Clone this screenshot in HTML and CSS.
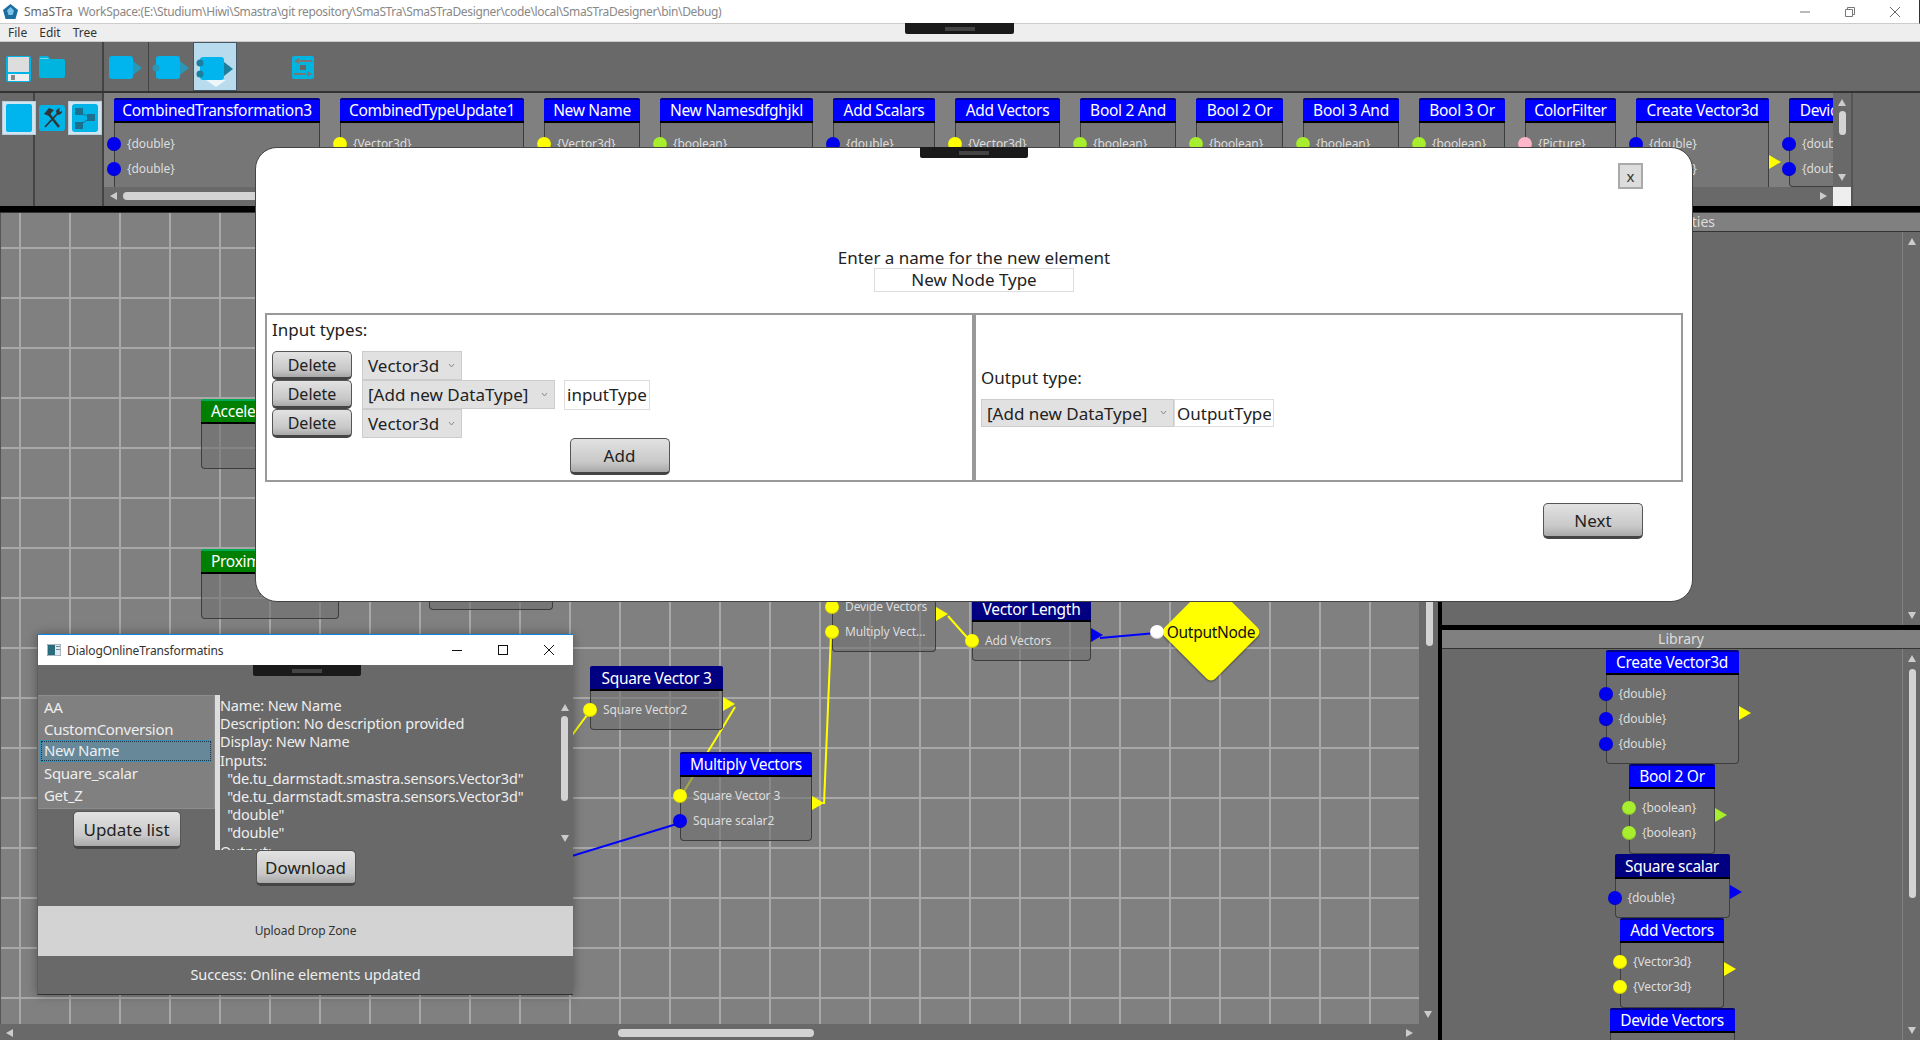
FILE: index.html
```html
<!DOCTYPE html>
<html>
<head>
<meta charset="utf-8"/>
<title>SmaSTra</title>
<link rel="stylesheet" href="styles.css">
</head>
<body>

<div class="app">

<!-- title + menu -->
<div class="titlebar">
	<svg class="appicon" width="15" height="15" viewBox="0 0 15 15"><path d="M7.5 0 15 6 12.5 15h-10L0 6z" fill="#1b6f9e"/><path d="M7.5 3 11 6.5 9.5 11h-4L4 6.5z" fill="#7fc4e6"/></svg>
	<span class="appname">SmaSTra</span>
	<span class="apppath">WorkSpace:(E:\Studium\Hiwi\Smastra\git repository\SmaSTra\SmaSTraDesigner\code\local\SmaSTraDesigner\bin\Debug)</span>
	<div class="winbtns">
		<svg width="12" height="12" viewBox="0 0 12 12"><path d="M1 6h10" stroke="#777"/></svg>
		<svg width="12" height="12" viewBox="0 0 12 12" fill="none" stroke="#777"><path d="M1.5 3.5h7v7h-7zM3.5 3.5v-2h7v7h-2"/></svg>
		<svg width="12" height="12" viewBox="0 0 12 12"><path d="M1 1l10 10M11 1 1 11" stroke="#666"/></svg>
	</div>
</div>
<div class="menubar"><span>File</span><span>Edit</span><span>Tree</span></div>

<!-- toolbar -->
<div class="toolbar">
	<div class="tool t37">
		<svg width="25" height="26" viewBox="0 0 25 26"><rect width="25" height="26" rx="2" fill="#00b4e8"/><rect x="2" y="1" width="21" height="15" fill="#ddd"/><rect x="2" y="18" width="21" height="7" fill="#eee"/><rect x="5" y="19" width="4" height="5" fill="#888"/></svg>
	</div>
	<div class="tool t30">
		<svg width="26" height="22" viewBox="0 0 26 22"><path d="M0 2q0-2 2-2h7l2 3h13q2 0 2 2v15q0 2-2 2H2q-2 0-2-2z" fill="#00b4e0"/><path d="M1 2h8l1 1H1z" fill="#6fd4ee"/></svg>
	</div>
	<div class="tool t36"></div>
	<div class="tool t45 line">
		<svg width="34" height="24" viewBox="0 0 34 24"><rect width="24" height="23" rx="3" fill="#00b4ee"/><path d="M24 5l9 7-9 7z" fill="#2a96b8"/></svg>
	</div>
	<div class="tool t45 line">
		<svg width="38" height="24" viewBox="0 0 38 24"><rect x="4" width="24" height="23" rx="3" fill="#00b4ee"/><circle cx="4" cy="12" r="3.5" fill="#2a96b8"/><path d="M28 5l9 7-9 7z" fill="#2a96b8"/></svg>
	</div>
	<div class="tool t44 on">
		<svg width="38" height="24" viewBox="0 0 38 24"><rect x="4" width="24" height="23" rx="3" fill="#00b4ee"/><circle cx="4" cy="6" r="3.5" fill="#1d7f9e"/><circle cx="4" cy="17" r="3.5" fill="#1d7f9e"/><path d="M28 5l9 7-9 7z" fill="#1d7f9e"/></svg>
		<svg class="chev" width="20" height="7" viewBox="0 0 20 7"><path d="M0 0h20L10 7z" fill="#eef6fa"/></svg>
	</div>
	<div class="tool t52"></div>
	<div class="tool t28">
		<svg width="22" height="23" viewBox="0 0 22 23"><rect width="22" height="23" rx="2" fill="#00b4e0"/><path d="M8 5H20M2 18h12" stroke="#777" stroke-width="2"/><path d="M7 2 2 5l5 3zM15 15l5 3-5 3z" fill="#777"/><rect x="8" y="9" width="6" height="5" fill="#666"/></svg>
	</div>
</div>

<!-- palette -->
<div class="palettebar">
	<div class="pick p34">
		<span class="pickon"><svg width="26" height="28" viewBox="0 0 26 28"><rect width="26" height="28" rx="2" fill="#00b4ee"/></svg></span>
	</div>
	<div class="pick p69">
		<svg class="hammer" width="26" height="26" viewBox="0 0 26 26"><rect width="26" height="26" rx="3" fill="#00b4e8"/><path d="M9 8 20 22" stroke="#333" stroke-width="2.500"/><path d="M5 9l5-6 5 2-2 2-3 4z" fill="#333"/><path d="M19 8 6 22" stroke="#333" stroke-width="1.800"/><path d="M17 7q0-3 4-4l-1 3 2 1 1-2q1 4-4 5z" fill="#333"/></svg>
		<span class="pickon"><svg width="26" height="28" viewBox="0 0 26 28"><rect width="26" height="28" rx="3" fill="#00b4e8"/><path d="M7 8 19 14 7 21" stroke="#1d6f8e" fill="none"/><rect x="3" y="4" width="8" height="7" fill="#1d6f8e"/><rect x="15" y="10" width="8" height="7" fill="#1d6f8e"/><rect x="3" y="18" width="8" height="7" fill="#1d6f8e"/></svg></span>
	</div>
	<div class="palwrap">
		<div class="palette">
			<div class="node w206"><div class="node-title">CombinedTransformation3</div><div class="node-body">
				<div class="row"><i class="pin blue"></i>{double}</div>
				<div class="row"><i class="pin blue"></i>{double}</div>
				<div class="row"><i class="pin yellow"></i>{Vector3d}</div>
			</div></div>
			<div class="node w184"><div class="node-title">CombinedTypeUpdate1</div><div class="node-body">
				<div class="row"><i class="pin yellow"></i>{Vector3d}</div>
			</div></div>
			<div class="node w96"><div class="node-title">New Name</div><div class="node-body">
				<div class="row"><i class="pin yellow"></i>{Vector3d}</div>
			</div></div>
			<div class="node w153"><div class="node-title">New Namesdfghjkl</div><div class="node-body">
				<div class="row"><i class="pin green"></i>{boolean}</div>
			</div></div>
			<div class="node w102"><div class="node-title">Add Scalars</div><div class="node-body">
				<div class="row"><i class="pin blue"></i>{double}</div>
			</div></div>
			<div class="node w105"><div class="node-title">Add Vectors</div><div class="node-body">
				<div class="row"><i class="pin yellow"></i>{Vector3d}</div>
			</div></div>
			<div class="node w96"><div class="node-title">Bool 2 And</div><div class="node-body">
				<div class="row"><i class="pin green"></i>{boolean}</div>
			</div></div>
			<div class="node w87"><div class="node-title">Bool 2 Or</div><div class="node-body">
				<div class="row"><i class="pin green"></i>{boolean}</div>
			</div></div>
			<div class="node w96"><div class="node-title">Bool 3 And</div><div class="node-body">
				<div class="row"><i class="pin green"></i>{boolean}</div>
			</div></div>
			<div class="node w86"><div class="node-title">Bool 3 Or</div><div class="node-body">
				<div class="row"><i class="pin green"></i>{boolean}</div>
			</div></div>
			<div class="node w91"><div class="node-title">ColorFilter</div><div class="node-body">
				<div class="row"><i class="pin pink"></i>{Picture}</div>
			</div></div>
			<div class="node w133"><div class="node-title">Create Vector3d</div><div class="node-body">
				<div class="row"><i class="pin blue"></i>{double}</div>
				<div class="row"><i class="pin blue"></i>{double}</div>
				<div class="row"><i class="pin blue"></i>{double}</div>
				<i class="out out-yellow"></i>
			</div></div>
			<div class="node w125"><div class="node-title">Devide Vectors</div><div class="node-body short">
				<div class="row"><i class="pin blue"></i>{double}</div>
				<div class="row"><i class="pin blue"></i>{double}</div>
			</div></div>
		</div>
		<div class="vscroll palv">
			<i class="arr up"></i><b class="thumb"></b><i class="arr dn"></i>
		</div>
		<div class="hscroll palh">
			<i class="arr lf"></i><b class="thumb"></b><i class="arr rt"></i>
		</div>
		<div class="corner"></div>
	</div>
	<div class="palrest"></div>
</div>

<div class="hsplit"></div>

<div class="work">

	<!-- canvas -->
	<div class="canvaswrap">
		<div class="canvas">
			<svg class="wires" width="1419" height="811">
				<path d="M735 494 680 585" stroke="#ffff00" stroke-width="2"/>
				<path d="M824 591 831 421" stroke="#ffff00" stroke-width="2"/>
				<path d="M948 403 972 430" stroke="#ffff00" stroke-width="2"/>
				<path d="M590 498 570 525" stroke="#ffff00" stroke-width="2"/>
				<path d="M680 610 500 665" stroke="#0000ff" stroke-width="2"/>
				<path d="M1100 425 1156 420" stroke="#0000ff" stroke-width="2"/>
			</svg>

			<div class="node green-node n-accel"><div class="node-title">Acceleration</div><div class="node-body fill"></div></div>
			<div class="node green-node n-prox"><div class="node-title">Proximity</div><div class="node-body fill"></div></div>
			<div class="node n-hidden"><div class="node-title">Square scalar2</div><div class="node-body fill"></div></div>

			<div class="node dark n-sv3"><div class="node-title">Square Vector 3</div><div class="node-body">
				<div class="row"><i class="pin yellow"></i>Square Vector2</div>
				<i class="out out-yellow"></i>
			</div></div>
			<div class="node n-mul"><div class="node-title">Multiply Vectors</div><div class="node-body">
				<div class="row"><i class="pin yellow"></i>Square Vector 3</div>
				<div class="row"><i class="pin blue"></i>Square scalar2</div>
				<i class="out out-yellow"></i>
			</div></div>
			<div class="node n-add"><div class="node-title">Add Vectors</div><div class="node-body">
				<div class="row"><i class="pin yellow"></i>Devide Vectors</div>
				<div class="row"><i class="pin yellow"></i>Multiply Vect...</div>
				<i class="out out-yellow"></i>
			</div></div>
			<div class="node dark n-len"><div class="node-title">Vector Length</div><div class="node-body">
				<div class="row"><i class="pin yellow"></i>Add Vectors</div>
				<i class="out out-blue"></i>
			</div></div>

			<div class="outnode">
				<i class="diamond"></i>
				<i class="pin white"></i>
				<span>OutputNode</span>
			</div>
		</div>
		<div class="vscroll canv">
			<i class="arr up"></i><b class="thumb"></b><i class="arr dn"></i>
		</div>
		<div class="hscroll canh">
			<i class="arr lf"></i><b class="thumb"></b><i class="arr rt"></i>
		</div>
		<div class="corner2"></div>
	</div>

	<div class="vsplit"></div>

	<!-- right column -->
	<div class="side">
		<div class="sidetop">
			<div class="sidehead">Properties</div>
			<div class="sidebody">
				<div class="vscroll sidev"><i class="arr up"></i><i class="arr dn"></i></div>
			</div>
		</div>
		<div class="hsplit2"></div>
		<div class="sidebot">
			<div class="sidehead">Library</div>
			<div class="sidebody">
				<div class="library">
					<div class="node w133"><div class="node-title">Create Vector3d</div><div class="node-body">
						<div class="row"><i class="pin blue"></i>{double}</div>
						<div class="row"><i class="pin blue"></i>{double}</div>
						<div class="row"><i class="pin blue"></i>{double}</div>
						<i class="out out-yellow"></i>
					</div></div>
					<div class="node w86"><div class="node-title">Bool 2 Or</div><div class="node-body">
						<div class="row"><i class="pin green"></i>{boolean}</div>
						<div class="row"><i class="pin green"></i>{boolean}</div>
						<i class="out out-green"></i>
					</div></div>
					<div class="node dark w115"><div class="node-title">Square scalar</div><div class="node-body">
						<div class="row"><i class="pin blue"></i>{double}</div>
						<i class="out out-blue"></i>
					</div></div>
					<div class="node w104"><div class="node-title">Add Vectors</div><div class="node-body">
						<div class="row"><i class="pin yellow"></i>{Vector3d}</div>
						<div class="row"><i class="pin yellow"></i>{Vector3d}</div>
						<i class="out out-yellow"></i>
					</div></div>
					<div class="node w125"><div class="node-title">Devide Vectors</div><div class="node-body">
						<div class="row"><i class="pin yellow"></i>{Vector3d}</div>
					</div></div>
				</div>
				<div class="vscroll libv"><i class="arr up"></i><b class="thumb"></b><i class="arr dn"></i></div>
			</div>
		</div>
	</div>
</div>
</div>

<div class="grip g-top"><b></b></div>

<!-- online transformations window -->
<div class="dlg">
	<div class="dlg-title">
		<svg width="14" height="12" viewBox="0 0 14 12"><rect width="14" height="12" fill="#dfe8ee" stroke="#789" /><rect x="1" y="1" width="7" height="10" fill="#2a6b7c"/><rect x="9" y="2" width="4" height="1" fill="#789"/><rect x="9" y="5" width="4" height="1" fill="#789"/></svg>
		<span class="dlg-name">DialogOnlineTransformatins</span>
		<div class="dlg-btns">
			<svg width="12" height="12" viewBox="0 0 12 12"><path d="M1 6.5h10" stroke="#111" stroke-width="1"/></svg>
			<svg width="12" height="12" viewBox="0 0 12 12"><rect x="1.5" y="1.5" width="9" height="9" fill="none" stroke="#111"/></svg>
			<svg width="12" height="12" viewBox="0 0 12 12"><path d="M1 1l10 10M11 1 1 11" stroke="#111"/></svg>
		</div>
	</div>
	<div class="dlg-body">
		<div class="grip g-dlg"><b></b></div>
		<div class="dlg-main">
			<div class="dlg-left">
				<ul class="elist">
					<li>AA</li>
					<li>CustomConversion</li>
					<li class="sel">New Name</li>
					<li>Square_scalar</li>
					<li>Get_Z</li>
				</ul>
				<button class="btn btn-update">Update list</button>
			</div>
			<div class="dlg-split"></div>
			<div class="dlg-info">Name: New Name
Description: No description provided
Display: New Name
Inputs:
  "de.tu_darmstadt.smastra.sensors.Vector3d"
  "de.tu_darmstadt.smastra.sensors.Vector3d"
  "double"
  "double"
Output:</div>
			<div class="vscroll dlgv"><i class="arr up"></i><b class="thumb"></b><i class="arr dn"></i></div>
		</div>
		<button class="btn btn-down">Download</button>
		<div class="dropzone">Upload Drop Zone</div>
		<div class="status">Success: Online elements updated</div>
	</div>
</div>

<!-- new element modal -->
<div class="modal">
	<div class="grip g-modal"><b></b></div>
	<div class="modal-top"><button class="xbtn">x</button></div>
	<div class="modal-head">Enter a name for the new element</div>
	<input class="modal-name" value="New Node Type">
	<div class="types">
		<div class="types-in">
			<div class="types-label">Input types:</div>
			<div class="trow">
				<button class="btn btn-del">Delete</button>
				<div class="combo c100">Vector3d<svg width="7" height="4" viewBox="0 0 7 4"><path d="M1 0 3.500 3 6 0" fill="none" stroke="#888"/></svg></div>
			</div>
			<div class="trow">
				<button class="btn btn-del">Delete</button>
				<div class="combo c193">[Add new DataType]<svg width="7" height="4" viewBox="0 0 7 4"><path d="M1 0 3.500 3 6 0" fill="none" stroke="#888"/></svg></div>
				<input class="tfield f-in" value="inputType">
			</div>
			<div class="trow">
				<button class="btn btn-del">Delete</button>
				<div class="combo c100">Vector3d<svg width="7" height="4" viewBox="0 0 7 4"><path d="M1 0 3.500 3 6 0" fill="none" stroke="#888"/></svg></div>
			</div>
			<button class="btn btn-add">Add</button>
		</div>
		<div class="types-out">
			<div class="types-label">Output type:</div>
			<div class="orow">
				<div class="combo c193 h28">[Add new DataType]<svg width="7" height="4" viewBox="0 0 7 4"><path d="M1 0 3.500 3 6 0" fill="none" stroke="#888"/></svg></div>
				<input class="tfield f-out" value="OutputType">
			</div>
		</div>
	</div>
	<div class="modal-foot"><button class="btn btn-next">Next</button></div>
</div>

</body>
</html>
```

FILE: styles.css
```css
*{box-sizing:border-box;}
html,body{margin:0;padding:0;height:100%;overflow:hidden;}
body{position:relative;font-family:"Noto Sans","Liberation Sans",sans-serif;background:#696969;color:#222;}
ul{margin:0;padding:0;list-style:none;}
button,input{font-family:inherit;}

.app{display:flex;flex-direction:column;height:1040px;}

/** title, menu **/
.titlebar{height:24px;background:#fff;border-bottom:1px solid #ccc;border-right:1px solid #333;display:flex;align-items:center;padding-left:3px;font-size:12px;color:#888;}
.appicon{margin-right:6px;}
.appname{color:#666;width:54px;}
.apppath{letter-spacing:-.35px;}
.winbtns{margin-left:auto;display:flex;gap:33px;padding-right:18px;}
.menubar{height:18px;background:#eee;border-bottom:1px solid #ccc;display:flex;gap:12px;padding-left:8px;font-size:12px;line-height:17px;color:#333;}

/** toolbar **/
.toolbar{height:51px;background:#696969;border-bottom:2px solid #333;display:flex;}
.tool{height:100%;display:flex;justify-content:center;padding-top:14px;position:relative;flex:none;}
.tool.line{border-left:1px solid #444;}
.t37{width:37px;}.t30{width:30px;}.t36{width:36px;border-right:1px solid #444;}
.t45{width:45px;}.t44{width:44px;}.t52{width:52px;}.t28{width:28px;}
.tool.on{background:#b8dcee;border:1px solid #456;}
.chev{position:absolute;bottom:3px;left:12px;}

/** palette row **/
.palettebar{height:113px;display:flex;background:#696969;}
.pick{flex:none;height:100%;border-right:2px solid #444;display:flex;align-items:flex-start;padding-top:8px;}
.p34{width:35px;padding-left:2px;}
.p69{width:69px;gap:3px;padding-left:4px;}
.pickon{background:#cfe6f2;padding:2px 3px;display:block;line-height:0;border:1px solid #bcd;}
.hammer{margin-top:4px;}
.palwrap{width:1747px;flex:none;display:grid;grid-template-columns:1729px 18px;grid-template-rows:94px 19px;}
.palette{display:flex;align-items:flex-start;gap:20px;padding:5px 0 0 10px;background:#808080;overflow:hidden;}
.palette .node-body{height:90px;padding-top:8px;}
.palette .node-body.short{height:64px;}
.palrest{flex:1;border-left:2px solid #555;background:#696969;}
.corner{background:#eee;}

/** shared node **/
.node{position:relative;flex:none;font-size:12px;color:#ddd;}
.node-title{height:25px;background:#0000ff;border-top:2px solid #000080;border-bottom:2px solid #000;border-radius:2px 2px 0 0;color:#fff;font-size:15.500px;letter-spacing:-.3px;line-height:20px;text-align:center;white-space:nowrap;overflow:hidden;}
.node.dark .node-title{background:#000080;}
.green-node .node-title{background:#008000;border-top-color:#0a5;text-align:left;padding-left:10px;}
.node-body{position:relative;padding:6.500px 0 6.900px;background:rgba(112,112,112,.6);border:1px solid #3d3d3d;border-top:0;border-radius:0 0 4px 4px;}
.node-body.fill{height:calc(100% - 25px);}
.row{height:25px;display:flex;align-items:center;white-space:nowrap;margin-left:-8px;gap:6px;line-height:1;letter-spacing:-.1px;}
.pin{display:block;flex:none;width:14px;height:14px;border-radius:50%;box-shadow:inset 0 -1px 1px rgba(0,0,0,.2);}
.pin.blue{background:#0000ee;}
.pin.yellow{background:#ffff00;}
.pin.green{background:#a6ee2e;}
.pin.pink{background:#ffb6c8;}
.pin.white{background:#fff;}
.out{position:absolute;left:100%;top:calc(50% - 13px);margin-left:1px;width:0;height:0;border-style:solid;border-width:7px 0 7px 12px;border-color:transparent;}
.out-yellow{border-left-color:#ffff00;}
.out-blue{border-left-color:#0000ee;}
.out-green{border-left-color:#a6ee2e;}

.w206{width:206px;}.w184{width:184px;}.w153{width:153px;}.w133{width:133px;}.w125{width:125px;}.w115{width:115px;}
.w105{width:105px;}.w104{width:104px;}.w102{width:102px;}.w96{width:96px;}.w91{width:91px;}.w87{width:87px;}.w86{width:86px;}

/** scrollbars **/
.vscroll{position:relative;background:#696969;}
.hscroll{position:relative;background:#696969;}
.arr{position:absolute;width:0;height:0;border-style:solid;border-color:transparent;}
.arr.up{border-width:0 4px 7px;border-bottom-color:#ccc;left:5px;top:6px;}
.arr.dn{border-width:7px 4px 0;border-top-color:#ccc;left:5px;bottom:6px;}
.arr.lf{border-width:4px 7px 4px 0;border-right-color:#ccc;left:6px;top:5px;}
.arr.rt{border-width:4px 0 4px 7px;border-left-color:#ccc;right:6px;top:5px;}
.thumb{position:absolute;background:#d3d3d3;border-radius:4px;}
.vscroll .thumb{width:7px;}
.hscroll .thumb{height:8px;}
.palv .thumb{left:6px;top:18px;height:24px;}
.palh .thumb{left:19px;top:5px;width:300px;}

/** splitters **/
.hsplit{height:7px;background:#000;border-bottom:1px solid #333;}
.hsplit2{height:5px;background:#000;flex:none;}
.vsplit{width:4px;background:#000;flex:none;}

/** work area **/
.work{flex:1;display:flex;min-height:0;}
.canvaswrap{width:1438px;flex:none;display:grid;grid-template-columns:1419px 19px;grid-template-rows:811px 17px;}
.canvas{position:relative;overflow:hidden;border-left:1px solid #555;background-color:#808080;
background-image:linear-gradient(to right,#a8a8a8 2px,transparent 2px),linear-gradient(#a8a8a8 2px,transparent 2px);
background-size:50px 50px;background-position:18px 0,0 34px;}
.wires{position:absolute;left:-1px;top:0;}
.canv .thumb{left:7px;top:320px;height:113px;}
.canh .thumb{left:618px;top:5px;width:196px;}
.canv .arr.up{top:20px;}

/* where each node sits on the canvas */
.canvas .node{position:absolute;}
.n-accel{left:200px;top:186px;width:140px;height:70px;}
.n-prox{left:200px;top:336px;width:138px;height:70px;}
.n-hidden{left:428px;top:330px;width:124px;height:67px;}
.n-sv3{left:589px;top:453px;width:133px;}
.n-mul{left:679px;top:539px;width:132px;}
.n-add{left:831px;top:350px;width:104px;}
.n-len{left:971px;top:384px;width:119px;}
.outnode{position:absolute;left:1159px;top:368px;width:102px;height:102px;display:flex;align-items:center;justify-content:center;font-size:15.500px;letter-spacing:-.3px;color:#111;}
.outnode span{position:relative;}
.diamond{position:absolute;left:15px;top:15px;width:72px;height:72px;background:#ffff00;border-radius:6px;transform:rotate(45deg);box-shadow:1px 1px 2px rgba(0,0,0,.4);}
.outnode .pin{position:absolute;left:-10px;top:44px;}

/** right column **/
.side{flex:1;display:flex;flex-direction:column;min-width:0;}
.sidetop{height:412px;flex:none;display:flex;flex-direction:column;}
.sidebot{flex:1;display:flex;flex-direction:column;min-height:0;}
.sidehead{height:19px;flex:none;background:#808080;border-bottom:1px solid #333;text-align:center;color:#ddd;font-size:14px;line-height:18px;}
.sidebody{flex:1;display:flex;min-height:0;background:#696969;}
.library{flex:1;display:flex;flex-direction:column;align-items:center;padding-top:1px;overflow:hidden;}
.sidev,.libv{width:18px;flex:none;border-left:1px solid #808080;margin-left:auto;}
.libv .thumb{left:6px;top:20px;height:229px;}

/** title grips **/
.grip{position:absolute;background:#1a1a1a;display:flex;justify-content:center;align-items:center;border-radius:0 0 2px 2px;z-index:5;}
.grip b{display:block;width:30px;height:4px;background:#444;}
.g-top{left:905px;top:23px;width:109px;height:11px;}
.g-modal{left:664px;top:-1px;width:108px;height:11px;}
.g-dlg{left:215px;top:0;width:108px;height:11px;}

/** buttons **/
.btn{display:block;background:linear-gradient(#e2e2e2,#c8c8c8 70%,#a8a8a8);border:1px solid #555;border-bottom:3px solid #444;border-radius:5px;color:#222;padding:0;cursor:pointer;}

/** dialog window **/
.dlg{position:absolute;left:37px;top:634px;width:536px;height:361px;display:flex;flex-direction:column;background:#696969;border-left:1px solid #0078d7;border-bottom:1px solid #333;box-shadow:0 0 10px rgba(0,0,0,.35);}
.dlg-title{height:31px;flex:none;background:#fff;border-top:1px solid #0a84e0;display:flex;align-items:center;padding-left:9px;font-size:12px;color:#333;letter-spacing:-.1px;}
.dlg-name{margin-left:6px;}
.dlg-btns{margin-left:auto;display:flex;gap:34px;padding-right:18px;}
.dlg-body{flex:1;position:relative;display:flex;flex-direction:column;}
.dlg-main{margin-top:30px;height:155px;display:flex;flex:none;color:#eee;}
.dlg-left{width:177px;flex:none;}
.elist{height:114px;background:#808080;border:1px solid #8c8c8c;border-left:0;font-size:15px;letter-spacing:-.3px;}
.elist li{height:22px;line-height:22px;padding-left:6px;}
.elist li.sel{background:#668899;border:1px solid #3a8fb5;outline:1px dotted #234;outline-offset:-2px;margin:0 2px;padding-left:3px;line-height:19px;}
.btn-update{width:108px;height:38px;margin:2px auto 0;font-size:17px;}
.dlg-split{width:5px;flex:none;background:#ddd;}
.dlg-info{flex:1;min-width:0;overflow:hidden;white-space:pre;font-size:14.500px;letter-spacing:-.15px;line-height:18.200px;margin-top:1px;}
.dlgv{width:16px;flex:none;background:none;}
.dlgv .thumb{left:4px;top:21px;height:85px;}
.dlgv .arr.up{top:9px;left:4px;}
.dlgv .arr.dn{bottom:8px;left:4px;}
.btn-down{width:100px;height:36px;margin:0 auto;font-size:17px;}
.dropzone{height:50px;margin-top:20px;background:#d3d3d3;text-align:center;line-height:50px;font-size:12px;letter-spacing:-.1px;color:#333;flex:none;}
.status{flex:1;text-align:center;color:#eee;font-size:14.500px;letter-spacing:-.1px;line-height:36px;}

/** modal **/
.modal{position:absolute;left:255px;top:147px;width:1438px;height:455px;background:#fff;border:1px solid #444;border-radius:22px;padding:15px 9px 0;z-index:3;font-size:17px;color:#222;}
.modal-top{display:flex;justify-content:flex-end;padding-right:40px;height:26px;}
.xbtn{width:25px;height:26px;background:#ddd;border:2px solid #aaa;font-size:15px;line-height:20px;color:#333;padding:0;}
.modal-head{margin-top:59px;text-align:center;line-height:19px;height:19px;}
.modal-name{display:block;width:200px;height:24px;margin:1px auto 0;border:1px solid #ddd;text-align:center;font-size:17px;color:#222;padding:0 0 1px;}
.types{margin-top:21px;height:169px;display:flex;}
.types-in{width:709px;flex:none;border:2px solid #999;padding:5px 5px 0;}
.types-out{flex:1;border:2px solid #999;padding-left:5px;display:flex;flex-direction:column;justify-content:center;}
.types-label{line-height:20px;height:20px;}
.types-in .types-label{margin-bottom:11px;}
.types-out .types-label{margin-bottom:11px;}
.trow{display:flex;height:29px;align-items:center;}
.btn-del{width:80px;height:29px;font-size:16px;margin-right:10px;}
.combo{height:29px;background:#e1e1e1;border:1px solid #ccc;display:flex;align-items:center;justify-content:space-between;padding:0 6px 0 5px;white-space:nowrap;flex:none;}
.c100{width:100px;}
.c193{width:193px;}
.h28{height:28px;}
.tfield{height:30px;border:1px solid #ddd;font-size:17px;color:#222;padding:0 2px;}
.f-in{width:86px;margin-left:9px;}
.f-out{width:100px;height:28px;}
.orow{display:flex;}
.btn-add{width:100px;height:37px;margin:0 auto;font-size:17px;}
.modal-foot{display:flex;justify-content:flex-end;padding-right:40px;margin-top:21px;}
.btn-next{width:100px;height:36px;font-size:17px;}
```
